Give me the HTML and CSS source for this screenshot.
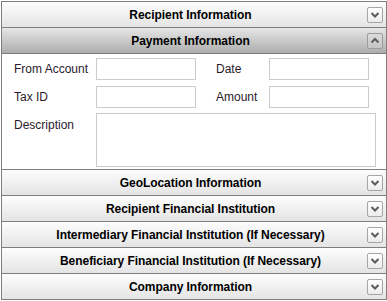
FILE: index.html
```html
<!DOCTYPE html>
<html>
<head>
<meta charset="utf-8">
<link rel="stylesheet" href="styles.css">
</head>
<body>
<div class="panel">
  <div class="hdr"><span class="title">Recipient Information</span><span class="tog"><svg viewBox="0 0 14 14" width="14" height="14"><polyline points="3.5,5 7,8.5 10.5,5" /></svg></span></div>
  <div class="hdr active"><span class="title">Payment Information</span><span class="tog"><svg viewBox="0 0 14 14" width="14" height="14"><polyline points="3.5,8.5 7,5 10.5,8.5" /></svg></span></div>
  <div class="content">
    <div class="form">
      <label class="lbl">From Account</label>
      <input class="inp" type="text">
      <label class="lbl lbl2">Date</label>
      <input class="inp" type="text">
      <label class="lbl">Tax ID</label>
      <input class="inp" type="text">
      <label class="lbl lbl2">Amount</label>
      <input class="inp" type="text">
      <label class="lbl lbl-top">Description</label>
      <textarea class="area"></textarea>
    </div>
  </div>
  <div class="hdr"><span class="title">GeoLocation Information</span><span class="tog"><svg viewBox="0 0 14 14" width="14" height="14"><polyline points="3.5,5 7,8.5 10.5,5" /></svg></span></div>
  <div class="hdr"><span class="title">Recipient Financial Institution</span><span class="tog"><svg viewBox="0 0 14 14" width="14" height="14"><polyline points="3.5,5 7,8.5 10.5,5" /></svg></span></div>
  <div class="hdr"><span class="title">Intermediary Financial Institution (If Necessary)</span><span class="tog"><svg viewBox="0 0 14 14" width="14" height="14"><polyline points="3.5,5 7,8.5 10.5,5" /></svg></span></div>
  <div class="hdr"><span class="title">Beneficiary Financial Institution (If Necessary)</span><span class="tog"><svg viewBox="0 0 14 14" width="14" height="14"><polyline points="3.5,5 7,8.5 10.5,5" /></svg></span></div>
  <div class="hdr"><span class="title">Company Information</span><span class="tog"><svg viewBox="0 0 14 14" width="14" height="14"><polyline points="3.5,5 7,8.5 10.5,5" /></svg></span></div>
</div>
</body>
</html>
```

FILE: styles.css
```css
html, body {
  margin: 0;
  padding: 0;
  background: #fff;
}
body {
  padding: 1px 0 0 1px;
  font-family: "Liberation Sans", Arial, sans-serif;
}
.panel {
  width: 384px;
  border: 1px solid #7f7f7f;
  display: flex;
  flex-direction: column;
}
.hdr {
  height: 25px;
  border-top: 1px solid #7f7f7f;
  background: linear-gradient(#fdfdfd, #e4e4e4);
  display: flex;
  align-items: center;
  padding: 0 3px 0 12px;
}
.hdr:first-child {
  border-top: none;
}
.hdr.active {
  background: linear-gradient(#e6e6e6, #adadad);
}
.title {
  flex: 1;
  text-align: center;
  font-weight: bold;
  font-size: 12px;
  letter-spacing: -0.05px;
  color: #000;
}
.tog {
  width: 14px;
  height: 14px;
  border: 1px solid #a6a6a6;
  border-radius: 2px;
  background: linear-gradient(#ffffff, #ececec);
  display: flex;
}
.hdr.active .tog {
  background: linear-gradient(#dcdcdc, #c4c4c4);
  border-color: #9c9c9c;
}
.tog polyline {
  fill: none;
  stroke: #5c5c5c;
  stroke-width: 2;
}
.content {
  border-top: 1px solid #7f7f7f;
  height: 116px;
  box-sizing: border-box;
  padding: 4px 0 0 12px;
  background: #fff;
}
.form {
  display: grid;
  grid-template-columns: 82px 100px 73px 100px;
  grid-template-rows: 22px 22px auto;
  row-gap: 6px;
}
.lbl {
  font-size: 12px;
  color: #2a1a2a;
  display: flex;
  align-items: center;
}
.lbl2 {
  padding-left: 20px;
}
.lbl-top {
  align-items: flex-start;
  padding-top: 5px;
  margin-top: -1px;
}
.inp {
  width: 100px;
  height: 22px;
  box-sizing: border-box;
  border: 1px solid #cccccc;
  margin: 0;
  padding: 0 3px;
  font-family: "Liberation Sans", Arial, sans-serif;
  font-size: 12px;
}
.area {
  grid-column: 2 / 5;
  width: 280px;
  height: 54px;
  box-sizing: border-box;
  border: 1px solid #cccccc;
  margin: -1px 0 0 0;
  padding: 2px;
  resize: none;
  font-family: "Liberation Sans", Arial, sans-serif;
}
```
